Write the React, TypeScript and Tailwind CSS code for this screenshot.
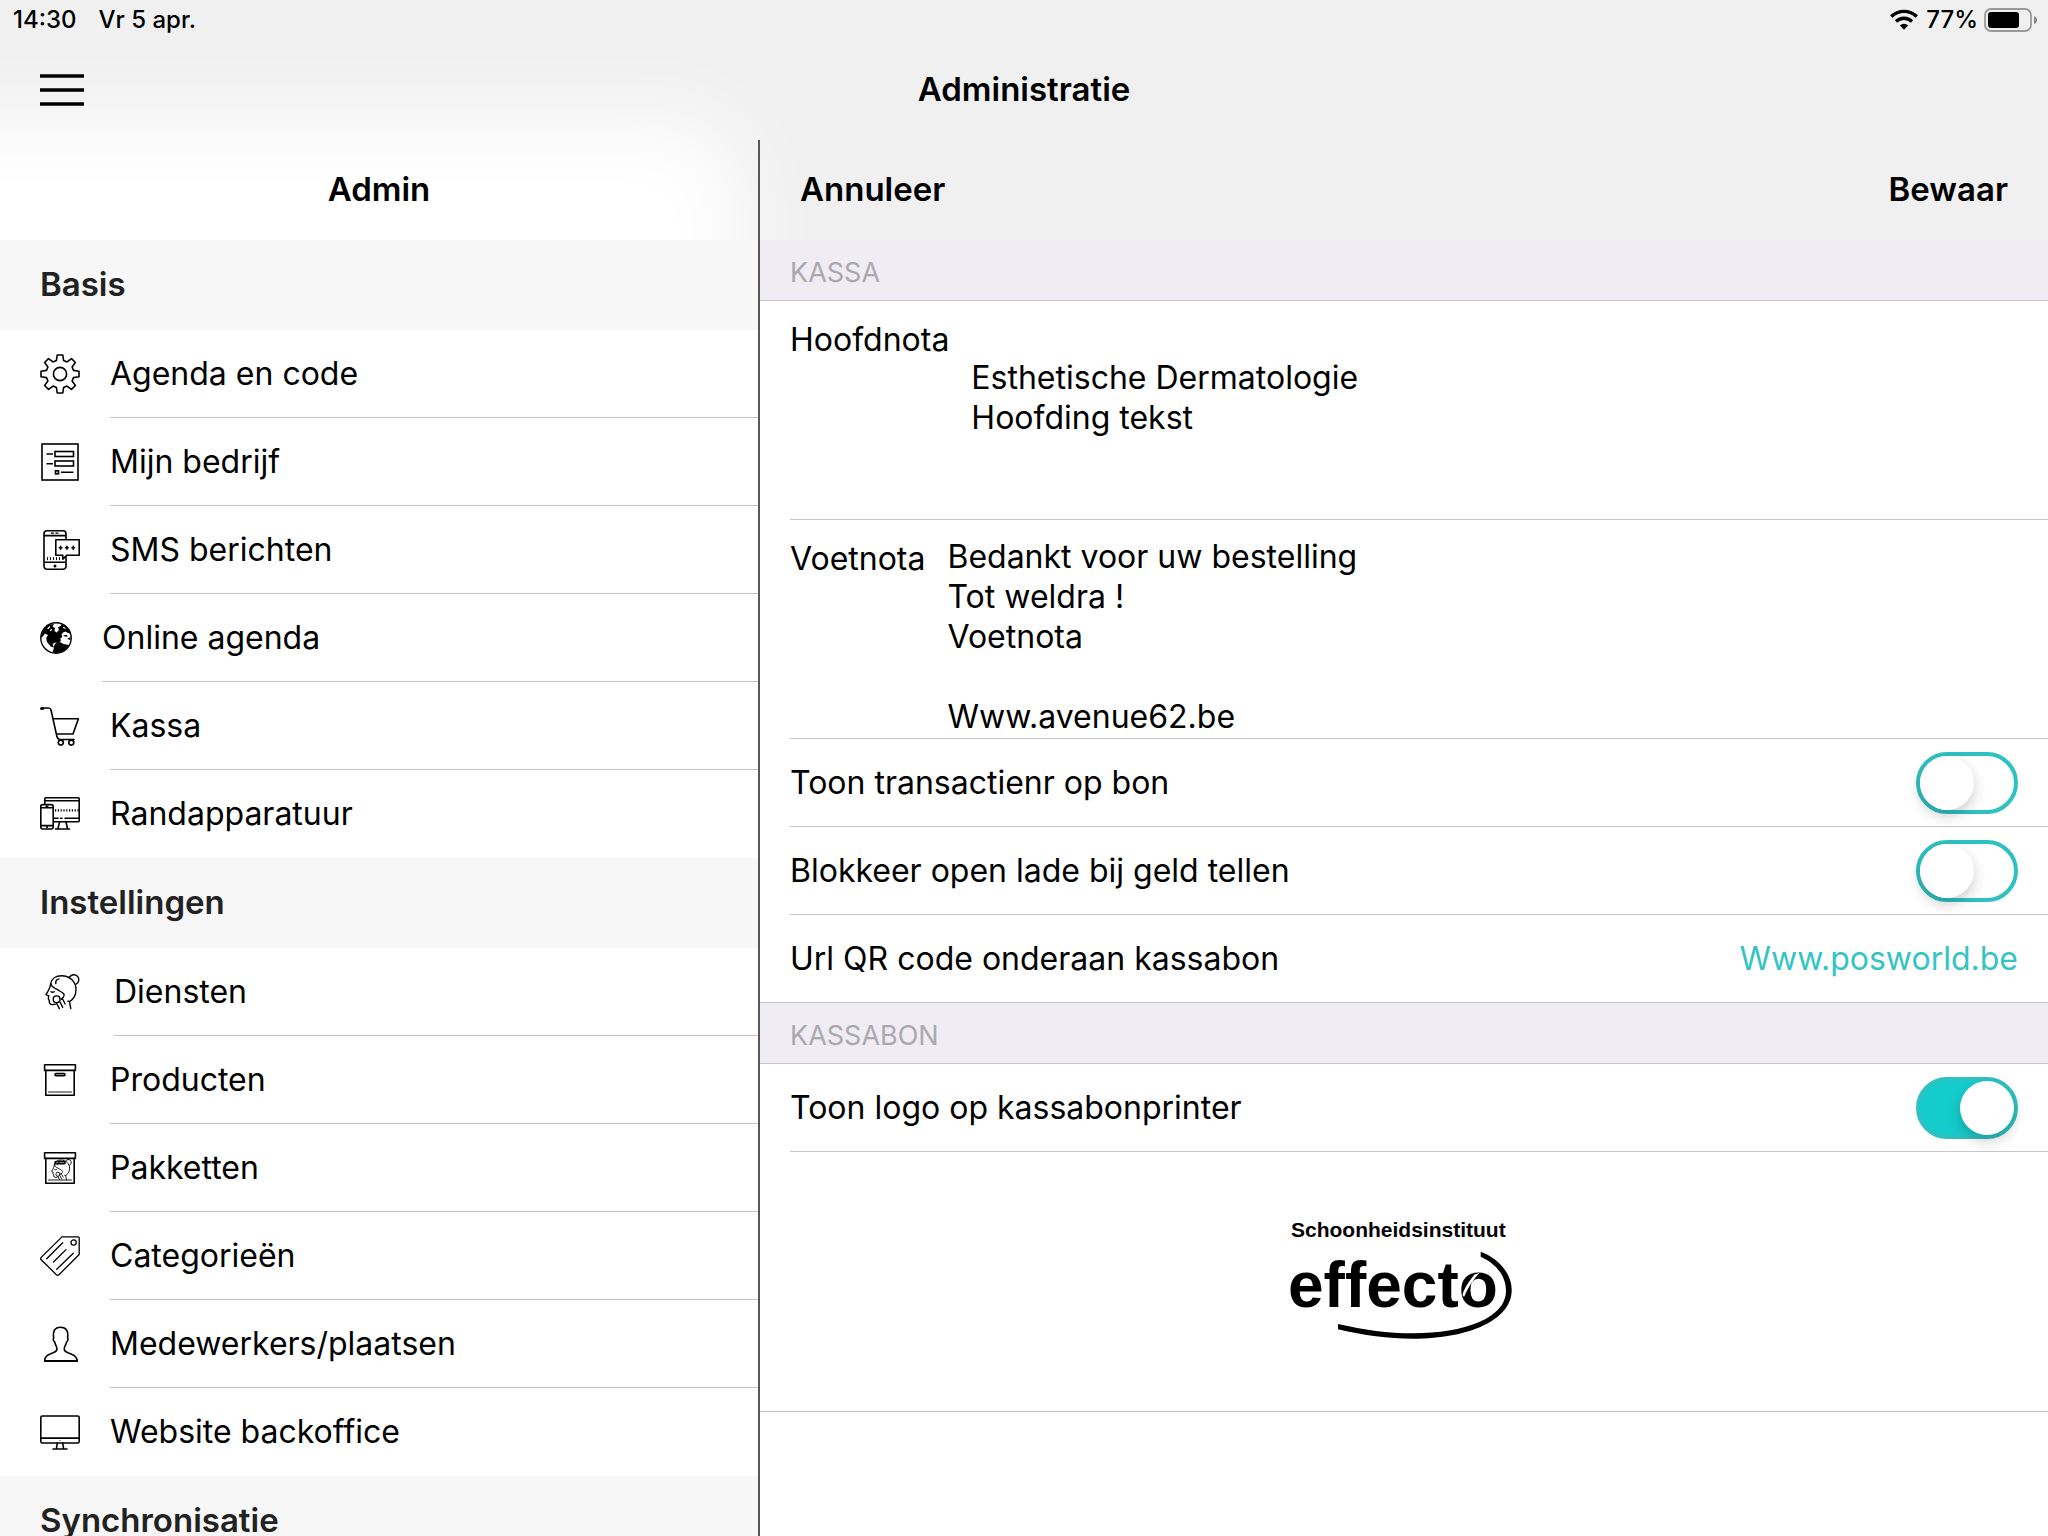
import { clsx } from "clsx";
import { useState } from "react";
import type { ReactNode, SVGProps } from "react";

type MenuItem = {
  label: string;
  icon: ReactNode;
};

type MenuSection = {
  title: string;
  items: MenuItem[];
};

const Icon = ({ size = 40, children, ...props }: SVGProps<SVGSVGElement> & { size?: number }) => (
  <svg
    width={size}
    height={size}
    viewBox={`0 0 ${size} ${size}`}
    fill="none"
    stroke="#000"
    strokeWidth={1.6}
    strokeLinecap="round"
    strokeLinejoin="round"
    className="shrink-0"
    aria-hidden="true"
    {...props}
  >
    {children}
  </svg>
);

const GearIcon = () => (
  <Icon>
    <path d="M16.4 6.5 17.2 1h5.6l.8 5.5L27 7.9l4.5-3.3 3.9 3.9-3.3 4.5 1.4 3.4 5.5.8v5.6l-5.5.8-1.4 3.4 3.3 4.5-3.9 3.9-4.5-3.3-3.4 1.4-.8 5.5h-5.6l-.8-5.5-3.4-1.4-4.5 3.3-3.9-3.9L7.9 27l-1.4-3.4-5.5-.8v-5.6l5.5-.8L7.9 13 4.6 8.5l3.9-3.9L13 7.9z" />
    <circle cx="20" cy="20" r="6.6" />
  </Icon>
);

const FormIcon = () => (
  <Icon strokeLinejoin="miter" strokeLinecap="butt">
    <rect x="2" y="2" width="36" height="36" />
    <rect x="15" y="9.5" width="18.5" height="5" />
    <rect x="15" y="19" width="18.5" height="5" />
    <rect x="15.5" y="28.8" width="3" height="3" />
    <path d="M21 30.3h12.5M6.5 12H13M6.5 21.7H13" />
  </Icon>
);

const SmsIcon = () => (
  <Icon>
    <path d="M26 9V3.8a3 3 0 0 0-3-3H7a3 3 0 0 0-3 3v32.4a3 3 0 0 0 3 3h16a3 3 0 0 0 3-3V27M4 5.6h22M4 32.2h22" />
    <path d="M39.2 9.8H15.8v15.4h7v4l4.2-4h12.2z" />
    <path d="M11.5 3.2h2M16 3.2h2" strokeWidth="1.2" />
    <path d="M7.5 27.6v2M10.5 27.6v2M13.5 27.6v2M16.5 27.6v2M19.5 27.6v2" strokeWidth="1.1" />
    <path d="M20.6 16.4v2.8M19.3 17.8h2.6M26.9 16.4v2.8M25.6 17.8h2.6M33.2 16.4v2.8M31.9 17.8h2.6" />
    <circle cx="15" cy="36" r=".7" fill="#000" />
  </Icon>
);

const GlobeIcon = () => (
  <Icon size={32}>
    <circle cx="16" cy="16" r="15.2" strokeWidth="1.4" />
    <g fill="#000" stroke="none">
      <path d="M3 9 5.500 5 9.500 2.500 14 2l-1.500 2.500L15 6l-.5 3 2 1.500L19 8l-1-2.500L20.500 4 22 1.800l4 2 3.500 4 1.500 4-3-.8-2.500-1.500-2.500 1-1.500 2 .8 2.500-2 1.500.5 2.500-1.800 2-3.500-.5-3 1.500 1.500 3.500-3-.8-2-2.200-2-2.500-.8-4 1.800-3-3-1.500L4 13l-2.500 3L1 14z" />
      <path d="m14.500 22.500 2-2 4-.2 3 1.700 2.500.5 3 .5-3.500 4.500-5 3-5 .5-3-1 1-2.500.5-2.500z" />
      <path d="m23 13.500 3.500-.8 1.500 1.500-2.500.5zM27 17l3.500-2v3z" />
    </g>
    <path d="M8 6.500 9.500 5M10.500 8.500l1-.8M23.500 5.500l1.500.8" stroke="#fff" strokeWidth="1.200" />
  </Icon>
);

const CartIcon = () => (
  <Icon>
    <path d="M1.5 3V2h7Q10.5 2 11 4l5.8 26Q17.6 33.5 20 33.5h14M12.8 12.7h25.6L33 28H16.4" />
    <path d="M1.200 2.600h2" strokeWidth="2.400" />
    <circle cx="20.8" cy="36.6" r="2.5" />
    <circle cx="31.3" cy="36.6" r="2.5" />
  </Icon>
);

const DevicesIcon = () => (
  <Icon>
    <path d="M4.8 10V4.7a1 1 0 0 1 1-1h32.400a1 1 0 0 1 1 1v22.1a1 1 0 0 1-1 1H14M5 6.8h34" />
    <path d="M14.5 24.2H18M20.5 24.2H22M25 24.2h14" />
    <path d="M15 16.3h24" strokeDasharray="1.200 1.600" strokeWidth="2.200" strokeLinecap="butt" />
    <path d="m19.5 28-1.5 6.5M26 28l1.5 6.5M15.5 35h14" />
    <rect x=".8" y="10.6" width="12.4" height="24.4" rx="2" />
    <path d="M1 13.8h12M1 31.6h12M6.2 12.2h1.6M6.8 33.3h.6" />
  </Icon>
);

const faceShapes = (
  <>
    <path d="M10.7 13.7C10.4 17 8.6 20.5 6 24.7l2.7 1.3-.4 2.5 1 2.2q-.2 4 2.9 3.9l3-.3" />
    <path d="M10.7 13.7C11.5 8.5 16 5.7 21.5 5.7c8.5 0 14.5 6 14.5 14 0 5-2.3 9.3-6.5 12l-1.700-.6M29.500 31.700c.6 3 .8 4.500 1.300 6.800" />
    <path d="M29.5 7.2a5 5 0 1 1 6.6 7M10.7 13.7c1.5 4.3 5.2 4.8 9 7.3 3.6 2 6 3.4 3.6 6.2l-1.8 2" />
    <path d="M15.8 13.5C15.5 11 17 9.3 19 8.9M11 21.7q1.6 1.2 3.2 0" />
    <circle cx="16.6" cy="29.3" r="3.4" />
    <path d="m16.4 33 3 5.600M20 32l2.700 5.400M21.500 28.500c2.500 1.500 2.400 3.300 3.600 5.500" />
  </>
);

const FaceIcon = () => (
  <Icon size={44} strokeWidth={1.4}>
    {faceShapes}
  </Icon>
);

const BoxShapes = () => (
  <>
    <rect x="4.6" y="4.8" width="30.8" height="5.6" />
    <path d="M5.8 10.4v24.8h28.4V10.4" />
    <path d="M8.5 32h23" strokeWidth=".9" />
    <rect x="15" y="13.6" width="10" height="2.2" rx="1.1" />
  </>
);

const BoxIcon = () => (
  <Icon>
    <BoxShapes />
  </Icon>
);

const PackageIcon = () => (
  <Icon>
    <BoxShapes />
    <g transform="translate(8 8.6) scale(.6)" strokeWidth="1.5">
      {faceShapes}
    </g>
  </Icon>
);

const TagIcon = () => (
  <Icon strokeWidth={1.300}>
    <path d="M22 .9h16.2a1 1 0 0 1 1 1v16.6L19 38.7q-1.3 1.1-2.6 0L1.2 23.7q-1.1-1.1 0-2.3z" />
    <circle cx="33.6" cy="6.5" r="2.6" />
    <path d="m6.7 22.7 16-16M13.5 26 26 13.6M16.7 33.3l16.6-16" />
  </Icon>
);

const PersonIcon = () => (
  <Icon>
    <path d="M4.7 37.2c-.2-4.4 2.3-6.2 5.6-7.3 4-1.4 6.6-2.2 6.7-4.9.1-2.3-1.800-4-2.300-7.100-1.600-.7-1.800-3.200-1-4C12.600 7.500 14.500 3.200 20.500 3.200S28.600 7.500 27.600 13.900c.8.800.5 3.300-1 4-.5 3.100-2.600 4.800-2.400 7.100.1 2.700 2.700 3.500 6.700 4.900 3.300 1.100 6.200 2.900 6.300 7.300z" />
    <path d="M5 37h32" strokeWidth="2" />
  </Icon>
);

const MonitorIcon = () => (
  <Icon>
    <rect x=".8" y="4" width="38.4" height="27" rx="1.6" />
    <path d="M1 26.2h38" strokeWidth="1.800" />
    <path d="m17.3 31-.8 5.200M22.700 31l.8 5.200M13 37h14" />
    <circle cx="20" cy="28.500" r=".5" fill="#000" stroke="none" />
  </Icon>
);

const sections: MenuSection[] = [
  {
    title: "Basis",
    items: [
      { label: "Agenda en code", icon: <GearIcon /> },
      { label: "Mijn bedrijf", icon: <FormIcon /> },
      { label: "SMS berichten", icon: <SmsIcon /> },
      { label: "Online agenda", icon: <GlobeIcon /> },
      { label: "Kassa", icon: <CartIcon /> },
      { label: "Randapparatuur", icon: <DevicesIcon /> },
    ],
  },
  {
    title: "Instellingen",
    items: [
      { label: "Diensten", icon: <FaceIcon /> },
      { label: "Producten", icon: <BoxIcon /> },
      { label: "Pakketten", icon: <PackageIcon /> },
      { label: "Categorieën", icon: <TagIcon /> },
      { label: "Medewerkers/plaatsen", icon: <PersonIcon /> },
      { label: "Website backoffice", icon: <MonitorIcon /> },
    ],
  },
  { title: "Synchronisatie", items: [] },
];

const StatusBar = () => (
  <div className="flex h-10 items-center justify-between pr-[10px] pl-[13px] text-[24px] leading-none font-medium">
    <div className="flex gap-[22px]">
      <span>14:30</span>
      <span>Vr 5 apr.</span>
    </div>
    <div className="flex items-center gap-2">
      <svg width="28" height="22" viewBox="0 0 28 22" aria-hidden="true">
        <g fill="none" stroke="#000" strokeWidth="3.4">
          <path d="M1.200 7.500a18.500 18.500 0 0 1 25.600 0" />
          <path d="M5.900 12.500a11.600 11.600 0 0 1 16.200 0" />
        </g>
        <path d="M9.900 16.400a6 6 0 0 1 8.200 0L14 20.800z" />
      </svg>
      <div className="flex items-center gap-1.5">
        <span>77%</span>
        <svg width="54" height="24" viewBox="0 0 54 24" aria-hidden="true">
          <rect x="1" y="1" width="46" height="22" rx="6" fill="none" stroke="#999" strokeWidth="1.800" />
          <rect x="4" y="4" width="31" height="16" rx="3" />
          <path d="M50 8q3 1 3 4t-3 4z" fill="#888" />
        </svg>
      </div>
    </div>
  </div>
);

const Sidebar = () => (
  <nav className="flex flex-col overflow-hidden border-r-2 border-[#58585a]">
    <h2 className="flex h-25 shrink-0 items-center justify-center text-[33px] font-semibold">
      Admin
    </h2>
    {sections.map(({ title, items }) => (
      <section key={title} className="shrink-0">
        <h3 className="flex h-[90px] items-center bg-[#f7f7f7] px-10 text-[33px] font-semibold text-[#222]">
          {title}
        </h3>
        <ul className="bg-white">
          {items.map(({ label, icon }, index) => (
            <li key={label}>
              <a href="#" className="flex h-22 items-center gap-[30px] pl-10">
                {icon}
                <span
                  className={clsx(
                    "flex h-full flex-1 items-center",
                    index < items.length - 1 && "border-b border-[#c6c6c8]",
                  )}
                >
                  {label}
                </span>
              </a>
            </li>
          ))}
        </ul>
      </section>
    ))}
  </nav>
);

const SectionTitle = ({ children }: { children: ReactNode }) => (
  <h3 className="flex h-[61px] items-center border-b border-[#c6c6c8] bg-[#efecf4] px-[30px] pt-1.5 text-[27px] text-[#a9a9ad]">
    {children}
  </h3>
);

type NoteRowProps = {
  id: string;
  label: string;
  defaultValue: string;
};

const NoteRow = ({ id, label, defaultValue }: NoteRowProps) => (
  <div className="ml-[30px] flex gap-[22px] border-b border-[#c6c6c8] pt-[17px]">
    <label htmlFor={id} className="leading-[44px]">
      {label}
    </label>
    <textarea
      id={id}
      rows={5}
      defaultValue={defaultValue}
      className="h-[201px] flex-1 resize-none overflow-hidden bg-transparent leading-[40px] outline-none"
    />
  </div>
);

type SwitchRowProps = {
  id: string;
  label: string;
  defaultChecked?: boolean;
};

const SwitchRow = ({ id, label, defaultChecked = false }: SwitchRowProps) => {
  const [checked, setChecked] = useState(defaultChecked);

  return (
    <div className="ml-[30px] flex h-22 items-center justify-between border-b border-[#c6c6c8] pr-[30px]">
      <label htmlFor={id}>{label}</label>
      <input
        id={id}
        type="checkbox"
        role="switch"
        checked={checked}
        onChange={() => setChecked(!checked)}
        className="h-[62px] w-[102px] cursor-pointer appearance-none rounded-full border-4 border-[#2fc1c1] bg-white transition-colors before:block before:size-[54px] before:rounded-full before:bg-white before:shadow-[0_6px_14px_rgba(0,0,0,0.2)] before:content-[''] checked:bg-[#15cccc] checked:before:translate-x-10"
      />
    </div>
  );
};

const EffectoLogo = () => (
  <svg width="240" height="120" viewBox="0 0 240 120" role="img" aria-label="Schoonheidsinstituut effecto">
    <g fontFamily="'Liberation Sans', Arial, sans-serif" fontWeight="700">
      <text x="7" y="17" fontSize="21">
        Schoonheidsinstituut
      </text>
      <text x="4" y="87" fontSize="64">
        effecto
      </text>
    </g>
    <path d="M178.500 75q1-7 12-20.500l5-1.500q-9 9-15.500 24z" fill="#fff" />
    <path d="M179.300 68q2.500-8 9-12.500-5.500 7.500-9 12.500z" />
    <path d="M196.700 31.700C212 37 227.700 52 227.700 70c0 30-42.700 48.700-98.700 48.700-25 0-49-3.200-75-9.400V104c26 6 50 9.300 75 9.300 51 0 93-15.300 93-42.300 0-16-11-28-25.300-34.300z" />
  </svg>
);

const ReceiptPanel = () => (
  <section className="flex flex-col overflow-hidden">
    <div className="flex h-25 shrink-0 items-center justify-between px-10 text-[33px] font-semibold">
      <button type="button" className="cursor-pointer">
        Annuleer
      </button>
      <button type="button" className="cursor-pointer">
        Bewaar
      </button>
    </div>

    <form className="flex-1 bg-white">
      <SectionTitle>KASSA</SectionTitle>
      <NoteRow
        id="hoofdnota"
        label="Hoofdnota"
        defaultValue={"\nEsthetische Dermatologie\nHoofding tekst"}
      />
      <NoteRow
        id="voetnota"
        label="Voetnota"
        defaultValue={"Bedankt voor uw bestelling\nTot weldra !\nVoetnota\n\nWww.avenue62.be"}
      />
      <SwitchRow id="transactienr" label="Toon transactienr op bon" />
      <SwitchRow id="blokkeer-lade" label="Blokkeer open lade bij geld tellen" />
      <div className="flex h-22 items-center border-b border-[#c6c6c8] px-[30px]">
        <label htmlFor="qr-url">Url QR code onderaan kassabon</label>
        <input
          id="qr-url"
          type="text"
          defaultValue="Www.posworld.be"
          className="min-w-0 flex-1 bg-transparent text-right text-[#35c4c4] outline-none"
        />
      </div>

      <SectionTitle>KASSABON</SectionTitle>
      <SwitchRow id="toon-logo" label="Toon logo op kassabonprinter" defaultChecked />
      <div className="flex h-[260px] items-center justify-center border-b border-[#c6c6c8] pb-1">
        <EffectoLogo />
      </div>
    </form>
  </section>
);

export default function App() {
  return (
    <div className="relative flex h-screen flex-col overflow-hidden bg-white font-['Inter',sans-serif] text-[32px] leading-tight text-black">
      <div className="absolute inset-x-0 top-0 h-60 overflow-hidden bg-[#f0f0f0]">
        <div className="mt-30 -ml-40 h-100 w-[44%] rounded-[60px] bg-white blur-[42px]" />
      </div>

      <header className="relative shrink-0">
        <StatusBar />
        <div className="grid h-25 grid-cols-[1fr_auto_1fr] items-center px-10">
          <button type="button" aria-label="Menu" className="w-11 cursor-pointer">
            <svg width="44" height="32" viewBox="0 0 44 32" stroke="#000" strokeWidth="3.500">
              <path d="M0 2h44M0 16h44M0 30h44" />
            </svg>
          </button>
          <h1 className="text-[33px] font-semibold">Administratie</h1>
        </div>
      </header>

      <main className="relative grid min-h-0 flex-1 grid-cols-[95fr_161fr]">
        <Sidebar />
        <ReceiptPanel />
      </main>
    </div>
  );
}
